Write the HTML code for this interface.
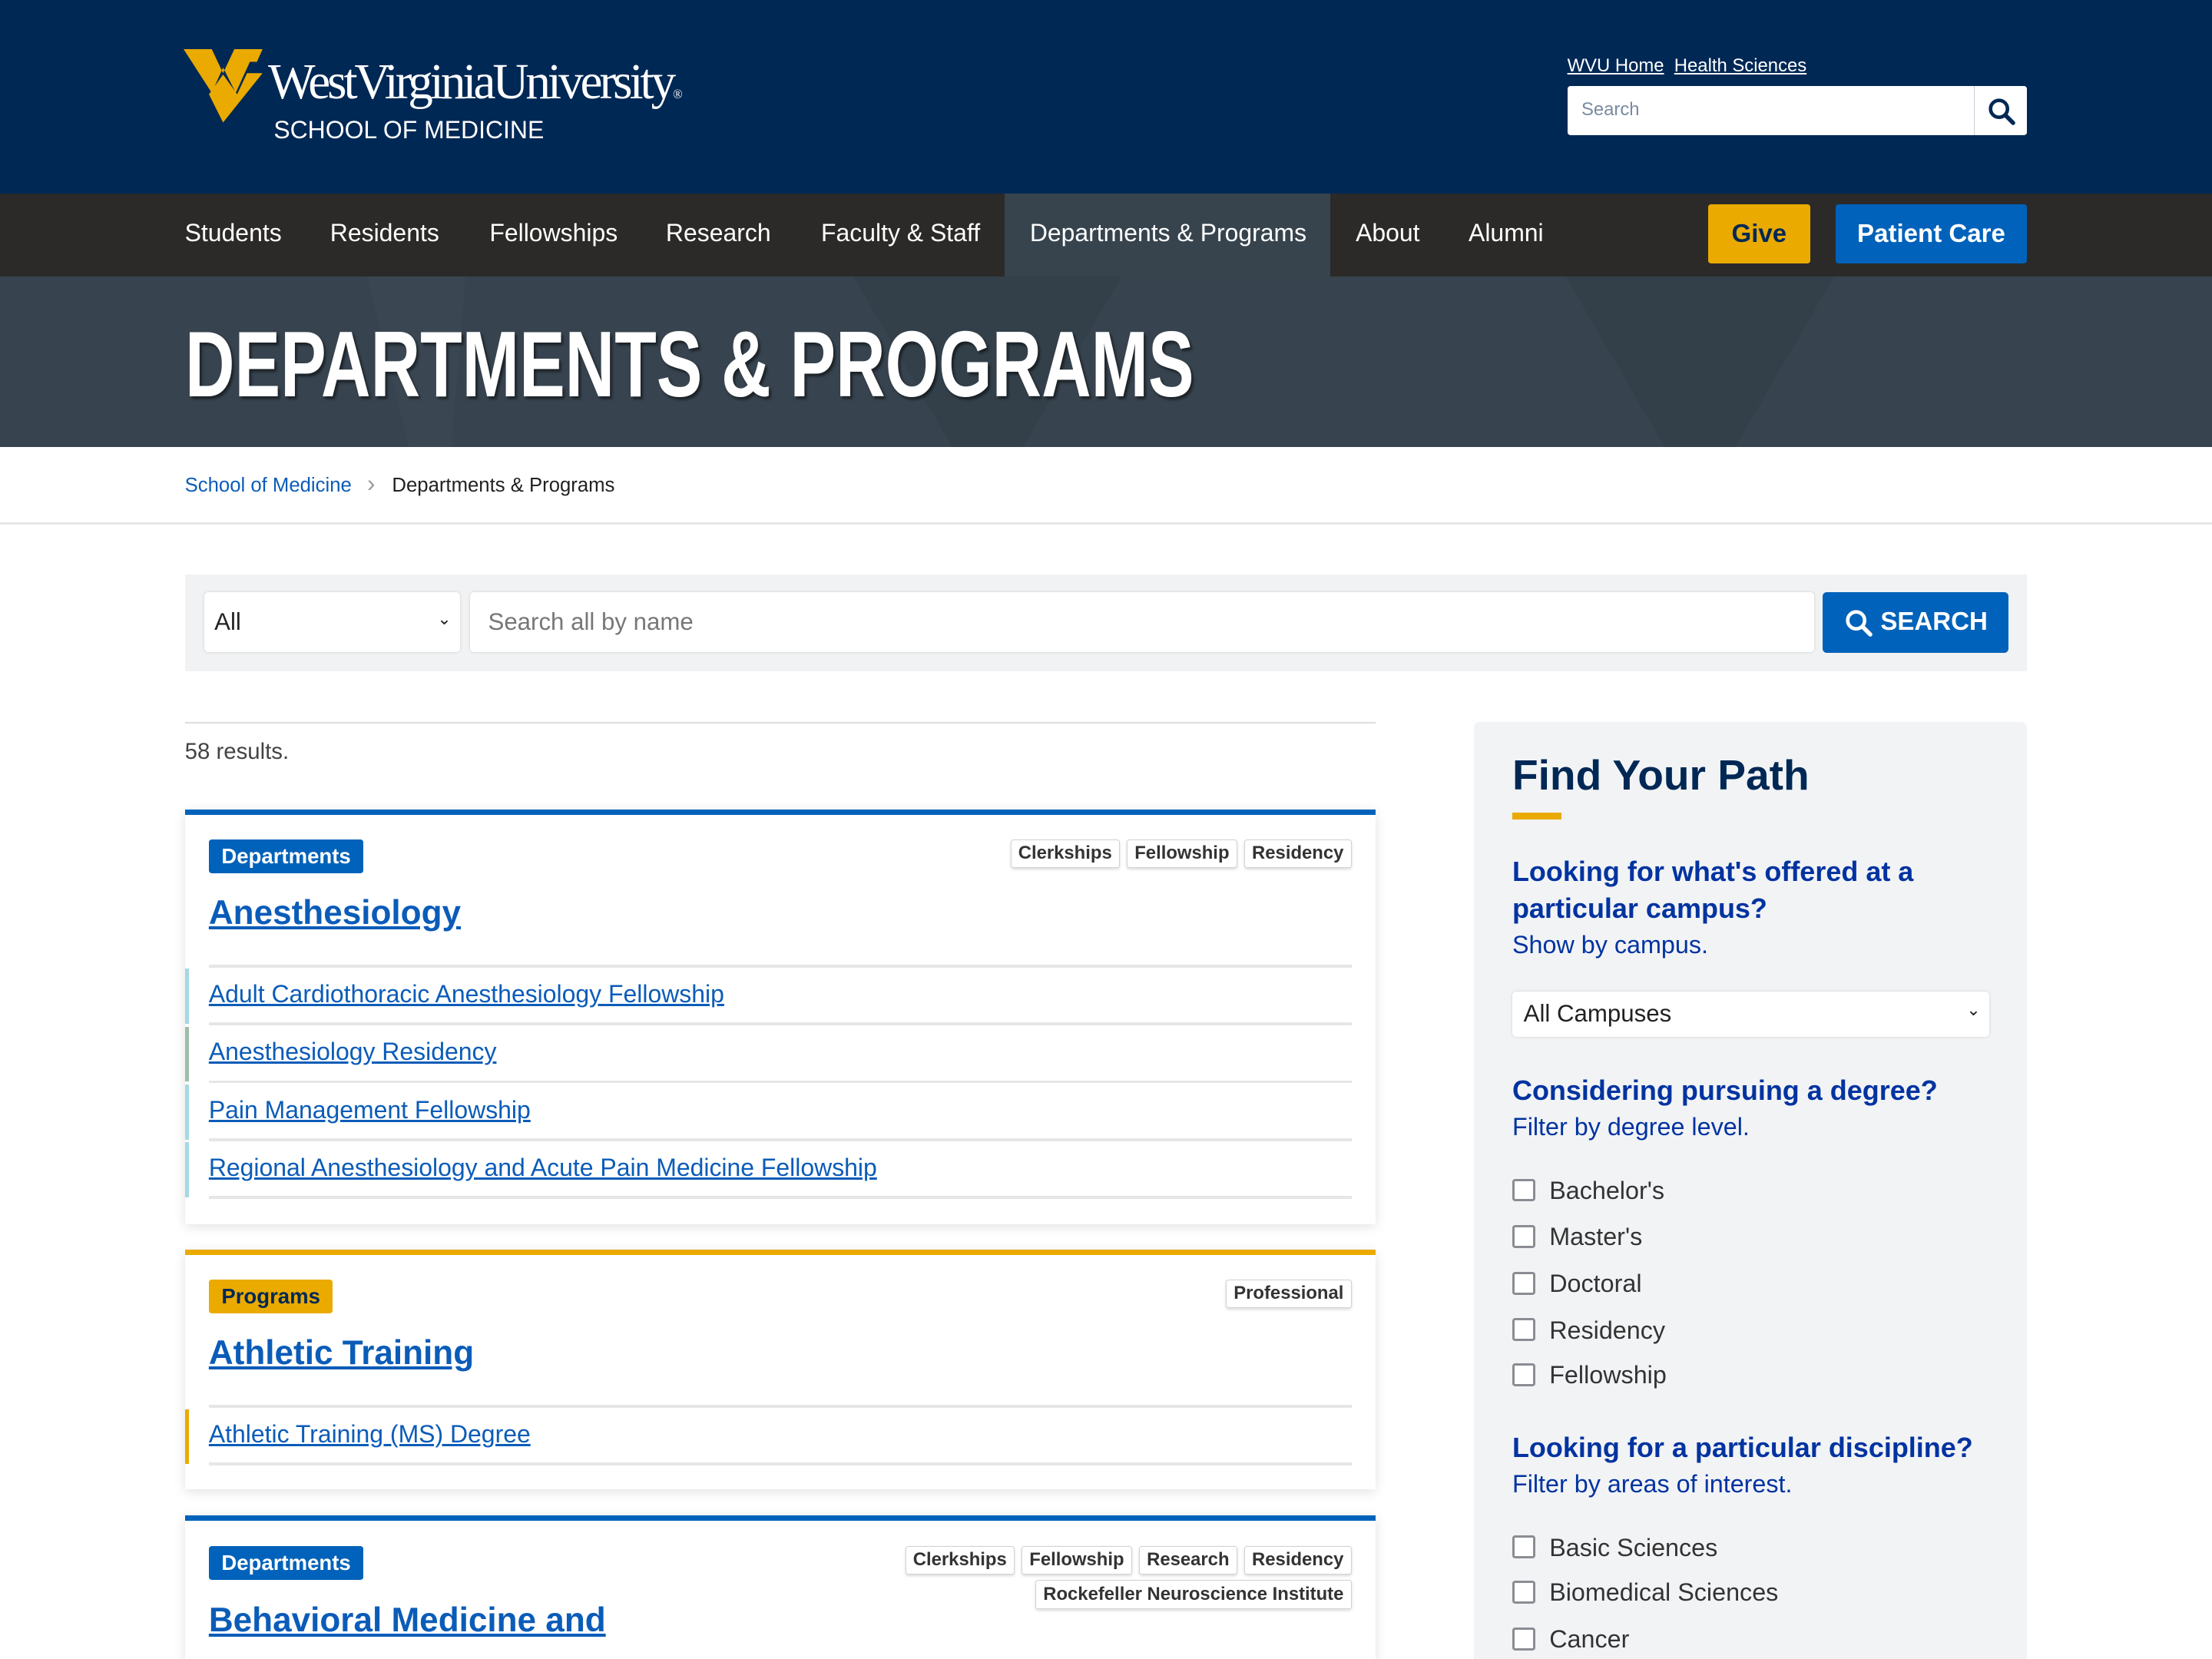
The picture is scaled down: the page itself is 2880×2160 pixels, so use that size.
<!DOCTYPE html>
<html style="height:2160px;overflow:hidden"><head><meta charset="utf-8"><style>
html,body{margin:0;padding:0}
body{width:1568px;height:1176px;zoom:1.83673;overflow:hidden;position:relative;background:#fff;font-family:"Liberation Sans",Arial,sans-serif;color:#222}
.a{position:absolute}
a{color:#0b5cb8}
.nav span{position:absolute;top:155px;font-size:17.4px;color:#fff;white-space:nowrap}
.card{position:absolute;left:131px;width:844px;background:#fff;box-shadow:0 2px 8px rgba(0,0,0,.12)}
.badge{position:absolute;left:17px;height:24px;line-height:24px;padding:0 9px;font-size:15px;font-weight:bold;border-radius:2px}
.tags{position:absolute;right:17px;display:flex;gap:5px;justify-content:flex-end;flex-wrap:wrap;width:400px}
.tag{border:1px solid #d0d4d6;box-shadow:0 1px 2px rgba(0,0,0,.15);font-size:13px;font-weight:bold;color:#333;padding:2px 5px;background:#fff;border-radius:2px}
.title{position:absolute;left:17px;font-size:24px;font-weight:bold;color:#0b5cb8;text-decoration:underline}
.hr{position:absolute;left:17px;right:17px;height:2px;background:#e6e6e6}
.item{position:absolute;left:17px;font-size:17.4px;color:#0b5cb8;text-decoration:underline}
.bar{position:absolute;left:0;width:3px}
.side{position:absolute;left:1045px;top:512px;width:392px;height:664px;background:#f2f3f5;border-radius:4px 4px 0 0}
.q{position:absolute;left:27px;font-size:19.6px;font-weight:bold;color:#0033a0;line-height:26px}
.s{position:absolute;left:27px;font-size:17.6px;color:#0033a0}
.cb{position:absolute;left:27px;font-size:17.6px;color:#333}
.cb i{display:inline-block;width:13px;height:13px;border:2px solid #8a8d93;border-radius:2px;background:#fff;vertical-align:-2px;margin-right:10px}
</style></head><body>
<div class="a" style="left:0;top:0;width:1568px;height:137px;background:#002855"></div>
<svg class="a" style="left:130px;top:35px" width="58" height="52" viewBox="0 0 58 52"><path d="M0 0H20L28 17L36 0H56L52 9H47L37 31L28 13L20 31ZM18 32L28 18L38 32L45 17H56L28 52Z" fill="#eaaa00"/></svg>
<div class="a" style="left:190px;top:38px;font-family:'Liberation Serif',serif;font-size:35.5px;color:#fff;letter-spacing:-2.2px;white-space:nowrap">WestVirginiaUniversity<span style="font-size:9px">®</span></div>
<div class="a" style="left:194px;top:82px;font-size:17.4px;color:#fff;white-space:nowrap">SCHOOL OF MEDICINE</div>
<div class="a" style="left:1111px;top:39px;font-size:13px;color:#fff"><span style="text-decoration:underline">WVU Home</span>&nbsp;&nbsp;<span style="text-decoration:underline">Health Sciences</span></div>
<div class="a" style="left:1111px;top:61px;width:326px;height:35px;background:#fff;border-radius:2px"></div>
<div class="a" style="left:1121px;top:70px;font-size:13px;color:#7a8aa0">Search</div>
<div class="a" style="left:1399px;top:61px;width:1px;height:35px;background:#c8ced6"></div>
<svg class="a" style="left:1409px;top:69px" width="20" height="20" viewBox="0 0 20 20"><circle cx="8" cy="8" r="6" fill="none" stroke="#002855" stroke-width="2.5"/><path d="M12.5 12.5L18 18" stroke="#002855" stroke-width="3" stroke-linecap="round"/></svg>
<div class="a" style="left:0;top:137px;width:1568px;height:59px;background:#2b2a28"></div>
<div class="a" style="left:712px;top:137px;width:231px;height:59px;background:#37444e"></div>
<div class="nav"><span style="left:131px">Students</span><span style="left:234px">Residents</span><span style="left:347px">Fellowships</span><span style="left:472px">Research</span><span style="left:582px">Faculty &amp; Staff</span><span style="left:730px">Departments &amp; Programs</span><span style="left:961px">About</span><span style="left:1041px">Alumni</span></div>
<div class="a" style="left:1211px;top:145px;width:72px;height:42px;background:#eaaa00;border-radius:2px;color:#002855;font-weight:bold;font-size:18px;text-align:center;line-height:42px">Give</div>
<div class="a" style="left:1301px;top:145px;width:136px;height:42px;background:#0062ba;border-radius:2px;color:#fff;font-weight:bold;font-size:18px;text-align:center;line-height:42px">Patient Care</div>
<div class="a" style="left:0;top:196px;width:1568px;height:121px;background:#37434e;overflow:hidden">
<svg width="1568" height="121"><path d="M260 0H330L320 121H290Z" fill="#3a4752"/><path d="M605 0H795L725 121H675Z" fill="#33404a"/><path d="M1110 0H1300L1230 121H1180Z" fill="#33404a"/></svg></div>
<div class="a" style="left:131px;top:220px;font-family:'Liberation Sans Narrow','Liberation Sans',sans-serif;font-weight:bold;font-size:66px;color:#fff;white-space:nowrap;transform-origin:0 0;transform:scaleX(.737);text-shadow:2px 2px 2px rgba(0,0,0,.5);letter-spacing:0px">DEPARTMENTS &amp; PROGRAMS</div>
<div class="a" style="left:131px;top:333px;font-size:14px"><a>School of Medicine</a><span style="color:#999;margin:0 12px 0 11px;font-size:17px">›</span><span style="color:#222">Departments &amp; Programs</span></div>
<div class="a" style="left:0;top:370px;width:1568px;height:2px;background:#e6e6e6"></div>
<div class="a" style="left:131px;top:407px;width:1306px;height:69px;background:#f1f2f3"></div>
<div class="a" style="left:145px;top:420px;width:181px;height:42px;background:#fff;border-radius:3px;box-shadow:0 0 2px rgba(0,0,0,.15)"><span style="position:absolute;left:7px;top:11px;font-size:17px">All</span><span style="position:absolute;right:6px;top:12px;font-size:12px">⌄</span></div>
<div class="a" style="left:333px;top:420px;width:953px;height:42px;background:#fff;border-radius:3px;box-shadow:0 0 2px rgba(0,0,0,.15)"><span style="position:absolute;left:13px;top:11px;font-size:17px;color:#777">Search all by name</span></div>
<div class="a" style="left:1292px;top:420px;width:132px;height:43px;background:#0062ba;border-radius:3px;color:#fff;font-weight:bold;font-size:18px;line-height:43px"><svg style="position:absolute;left:16px;top:12px" width="20" height="20" viewBox="0 0 20 20"><circle cx="8" cy="8" r="6" fill="none" stroke="#fff" stroke-width="2.5"/><path d="M12.5 12.5L18 18" stroke="#fff" stroke-width="3" stroke-linecap="round"/></svg><span style="position:absolute;left:41px">SEARCH</span></div>
<div class="a" style="left:131px;top:512px;width:844px;height:1px;background:#ddd"></div>
<div class="a" style="left:131px;top:524px;font-size:16px;color:#444">58 results.</div>
<div class="card" style="top:574px;height:290px;border-top:4px solid #0062ba">
<div class="badge" style="top:17px;background:#0062ba;color:#fff">Departments</div>
<div class="tags" style="top:17px"><span class="tag">Clerkships</span><span class="tag">Fellowship</span><span class="tag">Residency</span></div>
<div class="title" style="top:56px">Anesthesiology</div>
<div class="hr" style="top:106px"></div>
<div class="bar" style="top:109px;height:39px;background:#a6d9e2"></div><div class="item" style="top:117px">Adult Cardiothoracic Anesthesiology Fellowship</div><div class="hr" style="top:147px"></div>
<div class="bar" style="top:150px;height:39px;background:#9cbfa8"></div><div class="item" style="top:158px">Anesthesiology Residency</div><div class="hr" style="top:188px"></div>
<div class="bar" style="top:191px;height:39px;background:#a6d9e2"></div><div class="item" style="top:199px">Pain Management Fellowship</div><div class="hr" style="top:229px"></div>
<div class="bar" style="top:232px;height:39px;background:#a6d9e2"></div><div class="item" style="top:240px">Regional Anesthesiology and Acute Pain Medicine Fellowship</div><div class="hr" style="top:270px"></div>
</div>
<div class="card" style="top:886px;height:166px;border-top:4px solid #eaaa00">
<div class="badge" style="top:17px;background:#eaaa00;color:#002855">Programs</div>
<div class="tags" style="top:17px"><span class="tag">Professional</span></div>
<div class="title" style="top:56px">Athletic Training</div>
<div class="hr" style="top:106px"></div>
<div class="bar" style="top:109px;height:39px;background:#eaaa00"></div><div class="item" style="top:117px">Athletic Training (MS) Degree</div><div class="hr" style="top:147px"></div>
</div>
<div class="card" style="top:1074px;height:102px;border-top:4px solid #0062ba">
<div class="badge" style="top:18px;background:#0062ba;color:#fff">Departments</div>
<div class="tags" style="top:18px;width:330px;row-gap:4px"><span class="tag">Clerkships</span><span class="tag">Fellowship</span><span class="tag">Research</span><span class="tag">Residency</span><span class="tag">Rockefeller Neuroscience Institute</span></div>
<div class="title" style="top:52px;line-height:38px">Behavioral Medicine and<br>Psychiatry</div>
</div>
<div class="side">
<div class="a" style="left:27px;top:20px;font-size:30px;font-weight:bold;color:#002855">Find Your Path</div>
<div class="a" style="left:27px;top:64px;width:35px;height:5px;background:#eaaa00"></div>
<div class="q" style="top:93px">Looking for what's offered at a<br>particular campus?</div>
<div class="s" style="top:148px">Show by campus.</div>
<div class="a" style="left:27px;top:191px;width:338px;height:32px;background:#fff;border-radius:3px;box-shadow:0 0 2px rgba(0,0,0,.15)"><span style="position:absolute;left:8px;top:6px;font-size:17px">All Campuses</span><span style="position:absolute;right:6px;top:6px;font-size:12px">⌄</span></div>
<div class="q" style="top:248px">Considering pursuing a degree?</div>
<div class="s" style="top:277px">Filter by degree level.</div>
<div class="cb" style="top:322px"><i></i>Bachelor's</div>
<div class="cb" style="top:355px"><i></i>Master's</div>
<div class="cb" style="top:388px"><i></i>Doctoral</div>
<div class="cb" style="top:421px"><i></i>Residency</div>
<div class="cb" style="top:453px"><i></i>Fellowship</div>
<div class="q" style="top:501px">Looking for a particular discipline?</div>
<div class="s" style="top:530px">Filter by areas of interest.</div>
<div class="cb" style="top:575px"><i></i>Basic Sciences</div>
<div class="cb" style="top:607px"><i></i>Biomedical Sciences</div>
<div class="cb" style="top:640px"><i></i>Cancer</div>
</div>
</body></html>
